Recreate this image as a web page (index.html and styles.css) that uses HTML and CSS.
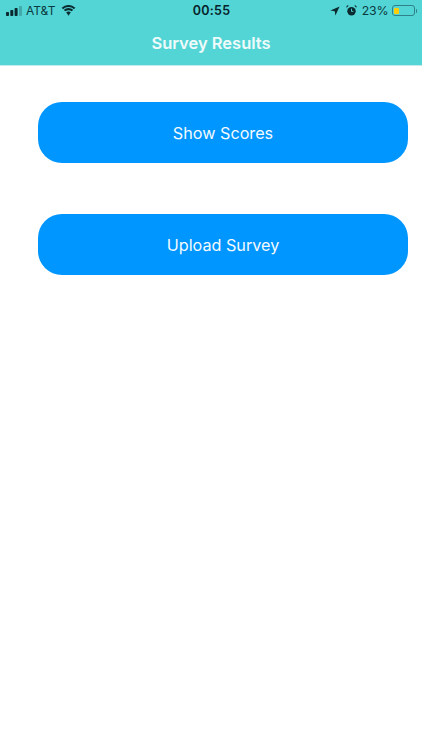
FILE: index.html
```html
<!DOCTYPE html>
<html lang="en">
<head>
    <meta charset="UTF-8">
    <meta name="viewport" content="width=device-width, initial-scale=1.0">
    <title>Survey Results</title>
    <link rel="stylesheet" href="styles.css">
</head>
<body>
    <header class="header">
        <div class="status-bar">
            <div class="status-left">
                <svg class="signal" viewBox="0 0 16 10">
                    <rect x="0" y="6" width="3" height="4" rx="0.8"/>
                    <rect x="4.300" y="4" width="3" height="6" rx="0.8"/>
                    <rect x="8.600" y="2" width="3" height="8" rx="0.8"/>
                    <rect x="13" y="0" width="3" height="10" rx="0.8" opacity="0.25"/>
                </svg>
                <span class="carrier">AT&amp;T</span>
                <svg class="wifi" viewBox="0 0 16 12">
                    <path d="M8 2.300c2.300 0 4.300.9 5.900 2.300l1.600-1.500C13.400 1.200 10.800 0 8 0S2.600 1.200.5 3.100l1.600 1.500C3.700 3.200 5.700 2.300 8 2.300z"/>
                    <path d="M8 5.600c1.300 0 2.500.5 3.500 1.300l1.500-1.500C11.600 4.200 9.900 3.400 8 3.400s-3.600.8-5 2l1.500 1.500c1-.8 2.200-1.300 3.500-1.300z"/>
                    <path d="M8 7c-1 0-1.900.4-2.500.9L8 11.800l2.500-3.900C9.900 7.400 9 7 8 7z"/>
                </svg>
            </div>
            <span class="time">00:55</span>
            <div class="status-right">
                <svg class="location" viewBox="0 0 12 12">
                    <path d="M11.500.5L.5 5.500l5.200.8.800 5.200z"/>
                </svg>
                <svg class="alarm" viewBox="0 0 12 12">
                    <circle cx="6" cy="6.800" r="4.600"/>
                    <path d="M.6 3L3 .8 1.600.4.400 1.600zM11.400 3L9 .8l1.400-.4 1.200 1.200z"/>
                    <path class="alarm-hand" d="M6 4v3h2"/>
                </svg>
                <span class="battery-text">23%</span>
                <div class="battery">
                    <div class="battery-body">
                        <div class="battery-level"></div>
                    </div>
                    <div class="battery-tip"></div>
                </div>
            </div>
        </div>
        <h1 class="title">Survey Results</h1>
    </header>

    <main class="content">
        <button class="action" type="button">Show Scores</button>
        <button class="action" type="button">Upload Survey</button>
    </main>
</body>
</html>
```

FILE: styles.css
```css
* {
    margin: 0;
    padding: 0;
    box-sizing: border-box;
}

body {
    font-family: Inter, "Liberation Sans", sans-serif;
    background: white;
    width: 422px;
    height: 750px;
    overflow: hidden;
}

.header {
    background: #54D5D5;
    height: 66px;
    border-bottom: 1px solid #C5ECEC;
}

.status-bar {
    height: 21px;
    padding: 0 5px 0 6px;
    display: grid;
    grid-template-columns: 1fr auto 1fr;
    align-items: center;
    color: #0A3A40;
    font-size: 12.300px;
}

.status-left {
    display: flex;
    align-items: center;
}

.status-right {
    display: flex;
    align-items: center;
    justify-content: flex-end;
}

.signal {
    width: 16px;
    height: 10px;
    fill: #0A2A30;
}

.carrier {
    margin-left: 4px;
    font-size: 12px;
}

.wifi {
    width: 15px;
    height: 11px;
    margin-left: 6px;
    fill: #0A2A30;
}

.time {
    font-size: 12.500px;
    font-weight: 600;
    letter-spacing: 0.3px;
    color: #06222A;
}

.location {
    width: 10px;
    height: 10px;
    fill: #0A2A30;
}

.alarm {
    width: 11px;
    height: 11px;
    margin-left: 6px;
    fill: #0A2A30;
}

.alarm-hand {
    fill: none;
    stroke: #54D5D5;
    stroke-width: 1;
}

.battery-text {
    margin-left: 5px;
    letter-spacing: -0.1px;
}

.battery {
    display: flex;
    align-items: center;
    margin-left: 3px;
}

.battery-body {
    width: 23px;
    height: 11px;
    padding: 1.500px;
    border: 1px solid #2F8088;
    border-radius: 3px;
}

.battery-level {
    width: 5px;
    height: 100%;
    background: #FFCC0A;
    border-radius: 1px;
}

.battery-tip {
    width: 1.500px;
    height: 4px;
    margin-left: 1px;
    background: #2F8088;
    border-radius: 0 1px 1px 0;
}

.title {
    height: 45px;
    line-height: 45px;
    text-align: center;
    font-size: 16.500px;
    font-weight: 600;
    color: #EFFBFB;
}

.content {
    display: flex;
    flex-direction: column;
    gap: 51px;
    padding: 36px 14px 0 38px;
}

.action {
    height: 61px;
    background: #0096FF;
    color: #F4FAFF;
    border: none;
    border-radius: 24px;
    font-family: inherit;
    font-size: 16.200px;
}
```
